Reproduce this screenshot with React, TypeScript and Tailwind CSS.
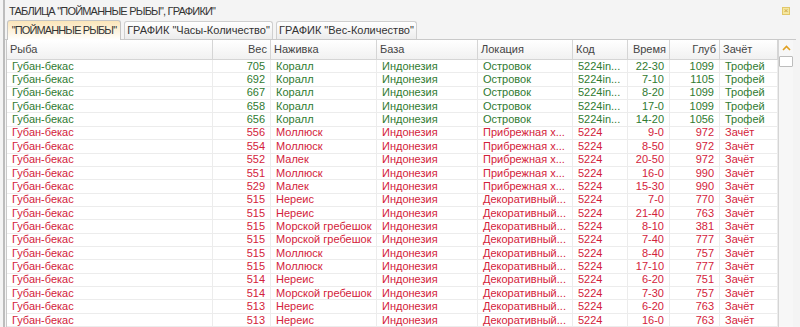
import React from "react";

type Row = {
  w: string;
  bait: string;
  loc: string;
  code: string;
  time: string;
  depth: string;
  trophy: boolean;
};

const rows: Row[] = [
  { w: "705", bait: "Коралл", loc: "Островок", code: "5224in...", time: "22-30", depth: "1099", trophy: true },
  { w: "692", bait: "Коралл", loc: "Островок", code: "5224in...", time: "7-10", depth: "1105", trophy: true },
  { w: "667", bait: "Коралл", loc: "Островок", code: "5224in...", time: "8-20", depth: "1099", trophy: true },
  { w: "658", bait: "Коралл", loc: "Островок", code: "5224in...", time: "17-0", depth: "1099", trophy: true },
  { w: "656", bait: "Коралл", loc: "Островок", code: "5224in...", time: "14-20", depth: "1056", trophy: true },
  { w: "556", bait: "Моллюск", loc: "Прибрежная х...", code: "5224", time: "9-0", depth: "972", trophy: false },
  { w: "554", bait: "Моллюск", loc: "Прибрежная х...", code: "5224", time: "8-50", depth: "972", trophy: false },
  { w: "552", bait: "Малек", loc: "Прибрежная х...", code: "5224", time: "20-50", depth: "972", trophy: false },
  { w: "551", bait: "Моллюск", loc: "Прибрежная х...", code: "5224", time: "16-0", depth: "990", trophy: false },
  { w: "529", bait: "Малек", loc: "Прибрежная х...", code: "5224", time: "15-30", depth: "990", trophy: false },
  { w: "515", bait: "Нереис", loc: "Декоративный...", code: "5224", time: "7-0", depth: "770", trophy: false },
  { w: "515", bait: "Нереис", loc: "Декоративный...", code: "5224", time: "21-40", depth: "763", trophy: false },
  { w: "515", bait: "Морской гребешок", loc: "Декоративный...", code: "5224", time: "8-10", depth: "381", trophy: false },
  { w: "515", bait: "Морской гребешок", loc: "Декоративный...", code: "5224", time: "7-40", depth: "777", trophy: false },
  { w: "515", bait: "Моллюск", loc: "Декоративный...", code: "5224", time: "8-40", depth: "757", trophy: false },
  { w: "515", bait: "Моллюск", loc: "Декоративный...", code: "5224", time: "17-10", depth: "777", trophy: false },
  { w: "514", bait: "Нереис", loc: "Декоративный...", code: "5224", time: "6-20", depth: "751", trophy: false },
  { w: "514", bait: "Морской гребешок", loc: "Декоративный...", code: "5224", time: "7-30", depth: "757", trophy: false },
  { w: "513", bait: "Нереис", loc: "Декоративный...", code: "5224", time: "6-20", depth: "763", trophy: false },
  { w: "513", bait: "Нереис", loc: "Декоративный...", code: "5224", time: "16-0", depth: "763", trophy: false },
];

const cols = "grid grid-cols-[206px_58px_106px_101px_95px_55px_42px_50px_58px]";

function Head({ children, right }: { children: React.ReactNode; right?: boolean }) {
  return (
    <div
      className={`h-[19px] flex items-center px-[3px] border-r border-[#d5d5d5] bg-gradient-to-b from-white to-[#f1f1f1] text-[#444] ${
        right ? "justify-end" : ""
      }`}
    >
      {children}
    </div>
  );
}

function Cell({ children, right }: { children: React.ReactNode; right?: boolean }) {
  return (
    <div
      className={`h-[13.37px] flex items-center px-[3px] border-r border-b border-[#ececec] whitespace-nowrap overflow-hidden ${
        right ? "justify-end pr-[5px]" : "pl-[5px]"
      }`}
    >
      {children}
    </div>
  );
}

export default function App() {
  return (
    <div
      className="w-[800px] h-[327px] overflow-hidden bg-[#f4f4f4] text-[11px] leading-none"
      style={{ fontFamily: '"Liberation Sans", Arial, sans-serif' }}
    >
      <div className="ml-[3px] mr-[4px] h-full border-l-2 border-[#bdbdbd] flex flex-col">
        {/* title bar */}
        <div className="h-[20px] flex items-center justify-between pl-[4px] pr-[6px] pt-[2px]">
          <span className="text-[#333] tracking-[-0.8px] whitespace-nowrap">ТАБЛИЦА &quot;ПОЙМАННЫЕ РЫБЫ&quot;, ГРАФИКИ&quot;</span>
          <span className="w-[8px] h-[8px] bg-[#f5e7a0] border border-[#e2c86a] text-[#c9a13a] text-[8px] leading-[6px] flex items-center justify-center">
            ×
          </span>
        </div>

        {/* tabs */}
        <div className="flex items-end h-[20px] pl-[2px] gap-[3px] border-b border-[#c9c9c9]">
          <div className="h-[20px] w-[114px] flex items-center justify-center whitespace-nowrap tracking-[-0.9px] border border-b-0 border-[#c4c4c4] rounded-t-[3px] bg-gradient-to-b from-[#fbe5b8] to-white text-[#333] -mb-px">
            &quot;ПОЙМАННЫЕ РЫБЫ&quot;
          </div>
          <div className="h-[18px] w-[149px] flex items-center justify-center whitespace-nowrap border border-b-0 border-[#cfcfcf] rounded-t-[3px] bg-gradient-to-b from-white to-[#ececec] text-[#333]">
            ГРАФИК &quot;Часы-Количество&quot;
          </div>
          <div className="h-[18px] w-[141px] flex items-center justify-center whitespace-nowrap border border-b-0 border-[#cfcfcf] rounded-t-[3px] bg-gradient-to-b from-white to-[#ececec] text-[#333]">
            ГРАФИК &quot;Вес-Количество&quot;
          </div>
        </div>

        {/* table */}
        <div className="flex-1 flex bg-white border-l border-[#c9c9c9] ml-[1px] mr-[3px] overflow-hidden">
          <div className="flex-1 flex flex-col">
            <div className={`${cols} border-b border-[#d5d5d5]`}>
              <Head>Рыба</Head>
              <Head right>Вес</Head>
              <Head>Наживка</Head>
              <Head>База</Head>
              <Head>Локация</Head>
              <Head>Код</Head>
              <Head right>Время</Head>
              <Head right>Глуб</Head>
              <Head>Зачёт</Head>
            </div>
            {rows.map((r, i) => (
              <div
                key={i}
                className={`${cols} ${r.trophy ? "text-[#2f7a30]" : "text-[#d3223a]"}`}
              >
                <Cell>Губан-бекас</Cell>
                <Cell right>{r.w}</Cell>
                <Cell>{r.bait}</Cell>
                <Cell>Индонезия</Cell>
                <Cell>{r.loc}</Cell>
                <Cell>{r.code}</Cell>
                <Cell right>{r.time}</Cell>
                <Cell right>{r.depth}</Cell>
                <Cell>{r.trophy ? "Трофей" : "Зачёт"}</Cell>
              </div>
            ))}
          </div>
          {/* scrollbar */}
          <div className="w-[16px] bg-[#f7f7f7] border-l border-[#d5d5d5] flex flex-col items-center">
            <div className="h-[16px] w-full flex items-center justify-center">
              <svg width="9" height="6" viewBox="0 0 9 6">
                <path d="M1 5 L4.5 1.5 L8 5" fill="none" stroke="#e0a020" strokeWidth="1.6" />
              </svg>
            </div>
            <div className="w-[14px] h-[11px] bg-white border border-[#bdbdbd] rounded-[1px]" />
          </div>
        </div>
      </div>
    </div>
  );
}
